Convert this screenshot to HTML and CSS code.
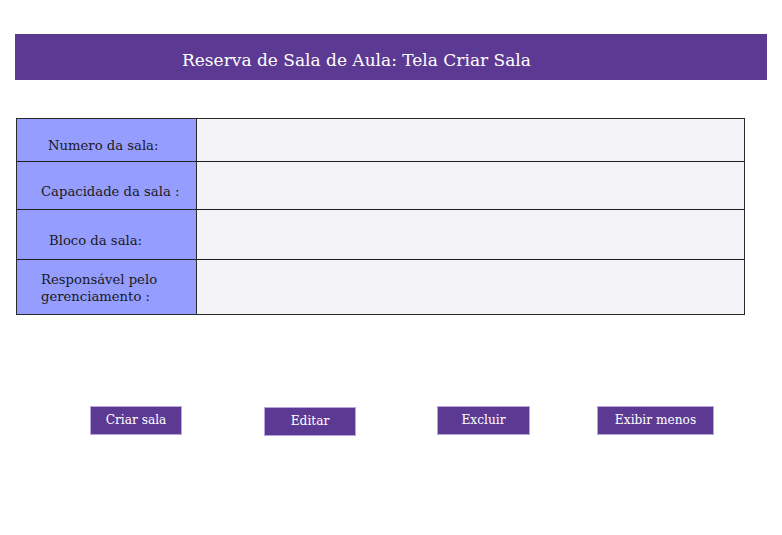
FILE: index.html
```html
<!DOCTYPE html>
<html lang="pt">
<head>
<meta charset="utf-8">
<title>Reserva de Sala de Aula</title>
<link rel="stylesheet" href="styles.css">
</head>
<body>
<header class="topbar">
  <h1 class="title">Reserva de Sala de Aula: Tela Criar Sala</h1>
</header>
<section class="form">
  <div class="row r1"><div class="label l1">Numero da sala:</div><div class="field"></div></div>
  <div class="row r2"><div class="label l2">Capacidade da sala :</div><div class="field"></div></div>
  <div class="row r3"><div class="label l3">Bloco da sala:</div><div class="field"></div></div>
  <div class="row r4"><div class="label l4">Responsável pelo<br>gerenciamento :</div><div class="field"></div></div>
</section>
<nav class="actions">
  <button class="btn b1">Criar sala</button>
  <button class="btn b2">Editar</button>
  <button class="btn b3">Excluir</button>
  <button class="btn b4">Exibir menos</button>
</nav>
</body>
</html>
```
FILE: styles.css
```css
html, body { margin: 0; padding: 0; background: #fff; }
body {
  width: 782px;
  height: 535px;
  font-family: "DejaVu Serif", "Liberation Serif", serif;
  padding-top: 34px;
  box-sizing: border-box;
}
.topbar {
  margin-left: 15px;
  width: 752px;
  height: 46px;
  background: #5c3a93;
  display: flex;
  align-items: center;
}
.title {
  margin: 5px 0 0 167px;
  color: #fff;
  font-weight: normal;
  font-size: 17px;
  letter-spacing: 0;
}
.form {
  margin: 38px 0 0 16px;
  width: 727px;
  border: 1.5px solid #2a2a2a;
  display: flex;
  flex-direction: column;
}
.row {
  display: flex;
  border-bottom: 1.5px solid #1e1e1e;
}
.row:last-child { border-bottom: none; }
.r1 { height: 42px; }
.r2 { height: 47px; }
.r3 { height: 49px; }
.r4 { height: 54px; }
.label {
  width: 180px;
  background: #959dff;
  border-right: 1.5px solid #2a2a2a;
  color: #1a1a1a;
  font-size: 13.2px;
  line-height: 17px;
  box-sizing: border-box;
}
.l1 { padding: 18px 0 0 31px; }
.l2 { padding: 21px 0 0 24px; }
.l3 { padding: 22px 0 0 32px; }
.l4 { padding: 11px 0 0 24px; }
.field {
  flex: 1;
  background: #f3f3f8;
}
.actions {
  display: flex;
  margin: 91px 0 0 90px;
  align-items: flex-start;
}
.btn {
  height: 29px;
  background: #5c3a93;
  color: #fff;
  border: 1px solid #b9a6dc;
  font-family: "DejaVu Serif", "Liberation Serif", serif;
  font-size: 12.2px;
  padding: 0 0 1px 0;
}
.b1 { width: 92px; }
.b2 { width: 92px; margin-left: 82px; margin-top: 1px; }
.b3 { width: 93px; margin-left: 81px; }
.b4 { width: 117px; margin-left: 67px; }
```
